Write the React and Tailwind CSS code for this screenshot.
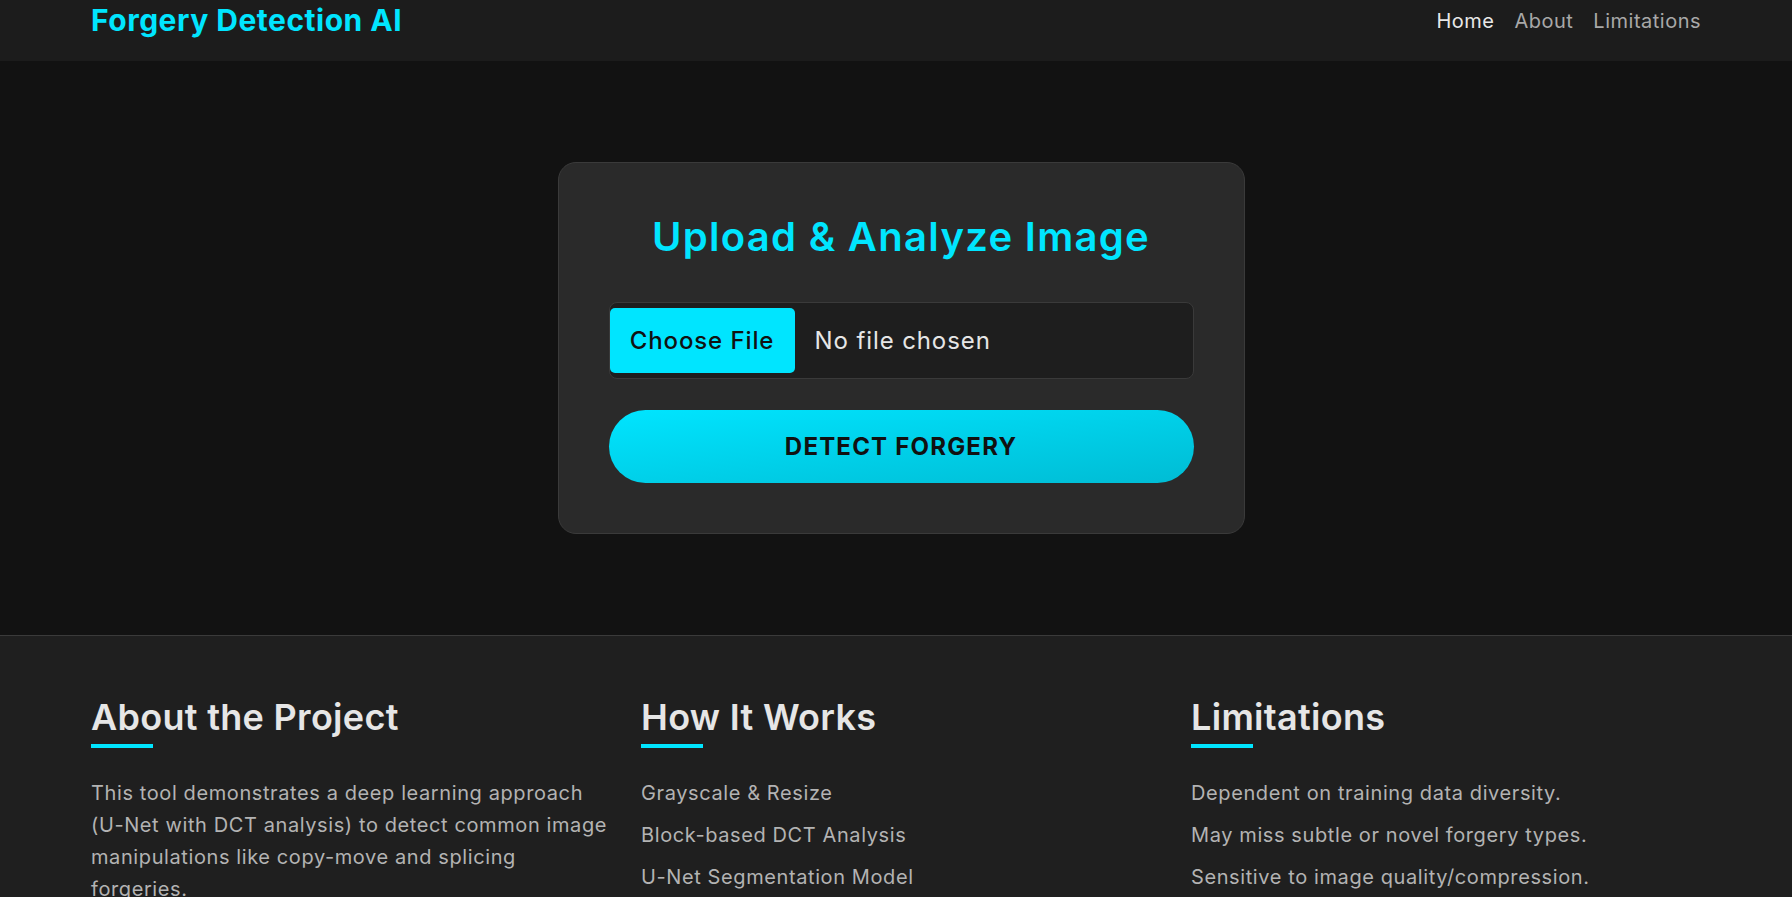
import React from 'react';

const columns = [
    {
        title: 'About the Project',
        text: 'This tool demonstrates a deep learning approach (U-Net with DCT analysis) to detect common image manipulations like copy-move and splicing forgeries.',
    },
    {
        title: 'How It Works',
        items: ['Grayscale & Resize', 'Block-based DCT Analysis', 'U-Net Segmentation Model'],
    },
    {
        title: 'Limitations',
        items: [
            'Dependent on training data diversity.',
            'May miss subtle or novel forgery types.',
            'Sensitive to image quality/compression.',
        ],
    },
];

const App = () => {
    return (
        <div className="min-h-screen bg-[#121212] font-['Inter','Noto_Sans',sans-serif] text-[#e0e0e0]">
            {/* Header */}
            <header className="h-[61px] bg-[#1c1c1c]">
                <div className="mx-[91px] h-[41px] flex items-center justify-between">
                    <div className="text-[30px] font-bold text-[#00e5ff] tracking-[0.5px]">Forgery Detection AI</div>
                    <nav className="flex items-center gap-5 text-[20px] tracking-[0.5px]">
                        <a className="text-[#e8e8e8]">Home</a>
                        <a className="text-[#a8a8a8]">About</a>
                        <a className="text-[#a8a8a8]">Limitations</a>
                    </nav>
                </div>
            </header>

            {/* Hero / upload */}
            <section className="flex justify-center pl-[10px] py-[101px]">
                <div className="w-[687px] bg-[#2a2a2a] border border-[#3a3a3a] rounded-[18px] px-[50px] pt-[50px] pb-[50px]">
                    <h1 className="text-center text-[40px] leading-[48px] font-semibold tracking-[1.3px] text-[#00e5ff]">
                        Upload &amp; Analyze Image
                    </h1>
                    <div className="mt-[41px] h-[77px] flex items-center bg-[#1e1e1e] border border-[#3a3a3a] rounded-lg">
                        <div className="w-[185px] h-[65px] flex items-center justify-center bg-[#00e5ff] rounded-[5px] text-[24px] font-medium tracking-[0.9px] text-[#111]">
                            Choose File
                        </div>
                        <span className="ml-5 text-[24px] tracking-[0.9px] text-[#e6e6e6]">No file chosen</span>
                    </div>
                    <button className="mt-[31px] w-full h-[73px] rounded-full bg-linear-to-br from-[#00e5ff] to-[#00bcd4] text-[24px] font-bold tracking-[1.2px] text-[#111]">
                        DETECT FORGERY
                    </button>
                </div>
            </section>

            {/* Info footer */}
            <footer className="bg-[#1f1f1f] border-t border-[#3a3a3a] pt-[59px] pb-16">
                <div className="mx-[91px] grid grid-cols-[520px_520px_1fr] gap-x-[30px]">
                    {columns.map(col => (
                        <div key={col.title}>
                            <h2 className="text-[36px] leading-[44px] font-semibold tracking-[0.3px] text-[#e6e6e6]">{col.title}</h2>
                            <div className="mt-[5px] w-[62px] h-[4px] bg-[#00e5ff]" />
                            {col.text && (
                                <p className="mt-[29px] text-[20px] leading-[32px] tracking-[0.6px] text-[#b3b3b3]">{col.text}</p>
                            )}
                            {col.items && (
                                <ul className="mt-[29px] space-y-[10px]">
                                    {col.items.map(item => (
                                        <li key={item} className="text-[20px] leading-[32px] tracking-[0.6px] text-[#b3b3b3]">{item}</li>
                                    ))}
                                </ul>
                            )}
                        </div>
                    ))}
                </div>
            </footer>
        </div>
    );
};

export default App;
